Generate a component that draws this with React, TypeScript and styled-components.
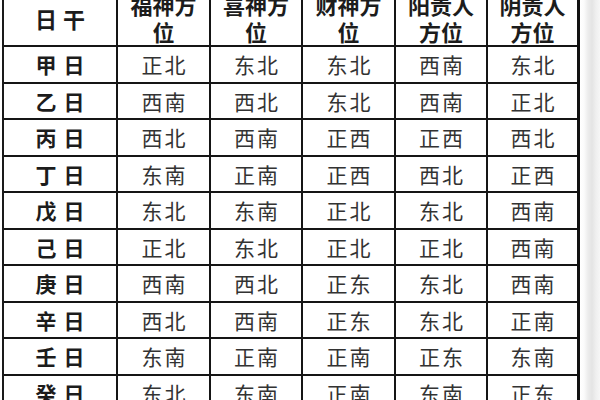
import styled, { createGlobalStyle } from "styled-components";

const GlobalStyle = createGlobalStyle`
  html, body {
    margin: 0;
    padding: 0;
    background: #ffffff;
  }
  body {
    font-family: "Noto Sans CJK SC", "Noto Sans", sans-serif;
  }
`;

const headers = [
  ["日干"],
  ["福神方", "位"],
  ["喜神方", "位"],
  ["财神方", "位"],
  ["阳贵人", "方位"],
  ["阴贵人", "方位"],
];

const rows: string[][] = [
  ["甲日", "正北", "东北", "东北", "西南", "东北"],
  ["乙日", "西南", "西北", "东北", "西南", "正北"],
  ["丙日", "西北", "西南", "正西", "正西", "西北"],
  ["丁日", "东南", "正南", "正西", "西北", "正西"],
  ["戊日", "东北", "东南", "正北", "东北", "西南"],
  ["己日", "正北", "东北", "正北", "正北", "西南"],
  ["庚日", "西南", "西北", "正东", "东北", "西南"],
  ["辛日", "西北", "西南", "正东", "东北", "正南"],
  ["壬日", "东南", "正南", "正南", "正东", "东南"],
  ["癸日", "东北", "东南", "正南", "东南", "正东"],
];

function App() {
  return (
    <Page>
      <GlobalStyle />
      <Grid>
        {headers.map((lines, i) => (
          <HeadCell key={i} $bottom={lines.length > 1}>
            {lines.map((l) => (
              <HeadLine key={l}>{l}</HeadLine>
            ))}
          </HeadCell>
        ))}
        {rows.map((row) =>
          row.map((cell, j) =>
            j === 0 ? (
              <DayCell key={row[0] + j}>{cell}</DayCell>
            ) : (
              <Cell key={row[0] + j}>{cell}</Cell>
            )
          )
        )}
      </Grid>
      <SideStrip />
    </Page>
  );
}

export default App;

const Page = styled.div`
  display: flex;
  width: 600px;
  height: 400px;
  overflow: hidden;
  background: #ffffff;
`;

const Grid = styled.div`
  display: grid;
  grid-template-columns: 112px 91px 90px 91px 90px 89px;
  grid-template-rows: 58px repeat(10, 34.5px);
  gap: 2px;
  background: #151515;
  border-left: 2px solid #1a1a1a;
  border-right: 3px solid #111111;
  border-top: 2px solid #151515;
  margin-left: 2px;
  margin-top: -15px;
  align-self: flex-start;
  flex-shrink: 0;
`;

const HeadCell = styled.div<{ $bottom: boolean }>`
  background: #ffffff;
  display: flex;
  flex-direction: column;
  align-items: center;
  justify-content: ${(p) => (p.$bottom ? "flex-end" : "center")};
  font-size: 22px;
  font-weight: 700;
  color: #1c1c1c;
  letter-spacing: ${(p) => (p.$bottom ? "0" : "6px")};
  padding-left: ${(p) => (p.$bottom ? "0" : "6px")};
  padding-top: ${(p) => (p.$bottom ? "0" : "4px")};
`;

const HeadLine = styled.span`
  display: block;
  line-height: 27px;
`;

const Cell = styled.div`
  background: #ffffff;
  display: flex;
  align-items: center;
  justify-content: center;
  font-size: 21px;
  font-weight: 400;
  color: #333333;
  letter-spacing: 2px;
  padding-left: 2px;
`;

const DayCell = styled(Cell)`
  font-weight: 700;
  color: #1c1c1c;
  letter-spacing: 7px;
  padding-left: 7px;
`;

const SideStrip = styled.div`
  flex: 1;
  background: linear-gradient(
    to right,
    #ffffff 0px,
    #fbfbfb 4px,
    #ececec 8px,
    #e4e4e4 12px,
    #efefef 16px,
    #f6f6f6 20px
  );
`;
